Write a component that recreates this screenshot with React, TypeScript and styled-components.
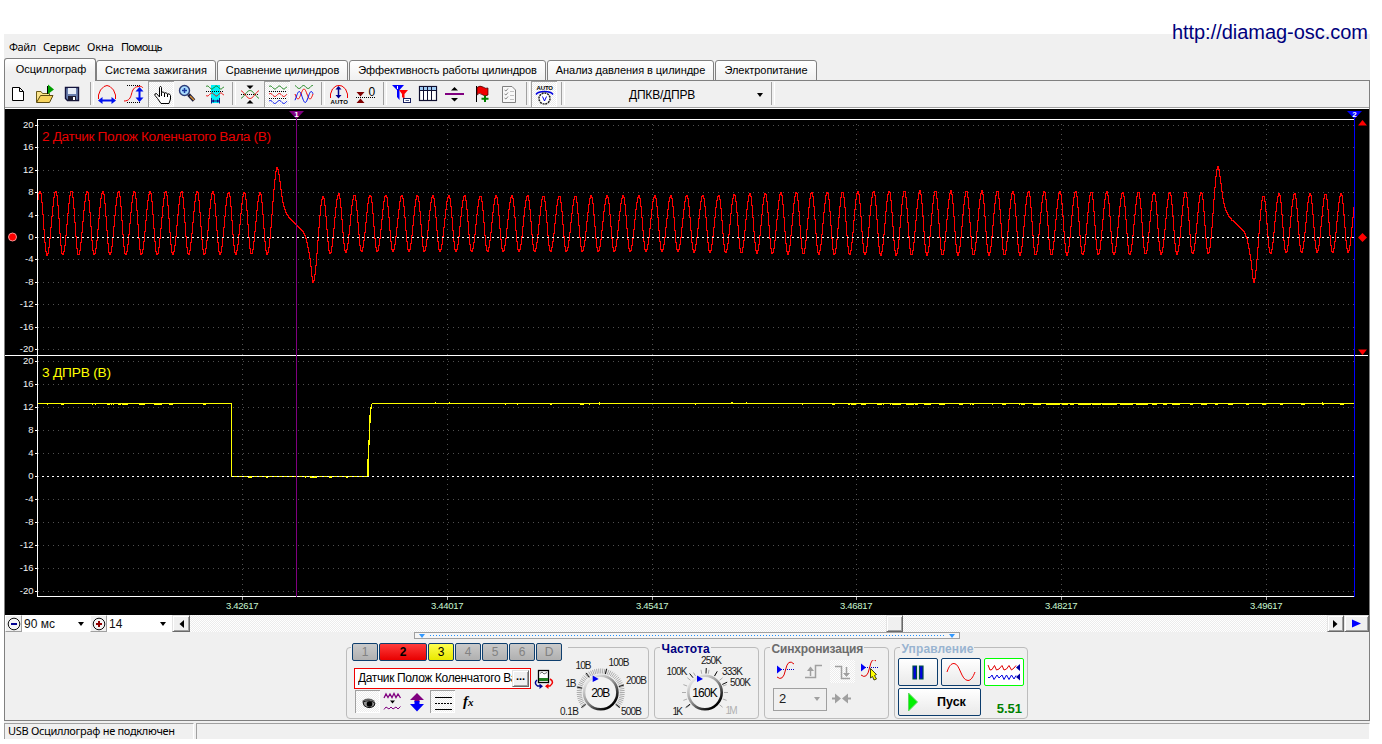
import React from "react";
import styled, { createGlobalStyle, css } from "styled-components";

const GlobalStyle = createGlobalStyle`
  * { box-sizing: border-box; }
  html, body { margin: 0; padding: 0; background: #fff; }
  body { font-family: "Liberation Sans", Arial, sans-serif; font-size: 11px; color: #000; overflow: hidden; }
  svg { display: block; }
`;

/* ---------- shell ---------- */

const Page = styled.div`
  position: relative;
  width: 1382px;
  height: 744px;
  padding: 34px 12px 5px 4px;
  background: #fff;
`;

const Window = styled.div`
  display: flex;
  flex-direction: column;
  width: 1366px;
  height: 705px;
  background: #f0f0f0;
`;

const SiteLink = styled.div`
  position: absolute;
  right: 14px;
  top: 20px;
  font-size: 20px;
  line-height: 24px;
  letter-spacing: -0.03px;
  color: #00007c;
`;

const MenuBar = styled.div`
  display: flex;
  gap: 7px;
  height: 24px;
  padding: 6px 0 0 5px;
  font-family: "Noto Sans", sans-serif;
  font-size: 11px;
  line-height: 14px;
`;

const MenuItem = styled.span<{ $w: number; $ls: number }>`
  width: ${(p) => p.$w}px;
  letter-spacing: ${(p) => p.$ls}px;
  white-space: nowrap;
`;

const TabRow = styled.div`
  display: flex;
  align-items: flex-end;
  height: 23px;
  gap: 1px;
  box-shadow: inset 0 -1px 0 #808080;
`;

const Tab = styled.div<{ $w: number; $active?: boolean; $ls: number }>`
  width: ${(p) => p.$w}px;
  height: 21px;
  border: 1px solid #808080;
  border-radius: 3px 3px 0 0;
  background: linear-gradient(#fff, #f0f0f0);
  text-align: center;
  line-height: 18px;
  letter-spacing: ${(p) => p.$ls}px;
  white-space: nowrap;
  ${(p) =>
    p.$active &&
    css`
      height: 23px;
      line-height: 21px;
      border-bottom: none;
      margin-right: -1px;
      padding-left: 2px;
      background: linear-gradient(#fff, #f0f0f0 60%);
    `}
`;

const PageFrame = styled.div`
  display: flex;
  flex-direction: column;
  height: 640px;
  border: 1px solid #808080;
  border-top: none;
`;

const StatusBar = styled.div`
  display: flex;
  gap: 2px;
  height: 18px;
  padding-top: 2px;
`;

const StatusCell = styled.div<{ $w?: number }>`
  ${(p) => (p.$w ? `width: ${p.$w}px;` : "flex: 1;")}
  border-top: 1px solid #a0a0a0;
  border-left: 1px solid #a0a0a0;
  border-right: 1px solid #fff;
  padding-left: 3px;
  font-family: "Noto Sans", sans-serif;
  font-size: 11px;
  line-height: 14px;
  letter-spacing: -0.3px;
  white-space: nowrap;
`;

/* ---------- toolbar ---------- */

const Toolbar = styled.div`
  display: flex;
  height: 28px;
  border-bottom: 1px solid #fff;
  box-shadow: inset 0 -1px 0 #a0a0a0;
`;

const dither = "repeating-conic-gradient(#fff 0 25%, #ececec 0 50%) 0 0 / 2px 2px";

const ToolButton = styled.div<{ $w: number; $pressed?: boolean }>`
  width: ${(p) => p.$w}px;
  height: 26px;
  ${(p) =>
    p.$pressed &&
    css`
      background: ${dither};
      box-shadow: inset 1px 1px 0 #a0a0a0, inset -1px -1px 0 #fff;
    `}
`;

const ToolSeparator = styled.div<{ $w: number; $at: number }>`
  width: ${(p) => p.$w}px;
  height: 25px;
  padding: 1px 0 0 ${(p) => p.$at}px;
  &::before {
    content: "";
    display: block;
    width: 2px;
    height: 23px;
    border-left: 1px solid #a0a0a0;
    border-right: 1px solid #fff;
  }
`;

const PresetCombo = styled.div`
  display: flex;
  align-items: center;
  justify-content: space-between;
  width: 202px;
  padding: 0 4px 0 64px;
  font-size: 12px;
  letter-spacing: -0.2px;
`;

const Caret = styled.span<{ $color?: string }>`
  width: 0;
  height: 0;
  border: 3px solid transparent;
  border-top: 4px solid ${(p) => p.$color || "#000"};
  border-bottom: none;
`;

const wave = (x0: number, x1: number, y: number, a: number, period: number, phase = 0) => {
  let d = "";
  for (let x = x0; x <= x1; x += 0.5) {
    d += `${d ? "L" : "M"}${x} ${(y - a * Math.sin(((x - x0) / period + phase) * 2 * Math.PI)).toFixed(2)}`;
  }
  return d;
};

const RED = "#f00000";
const BLUE = "#0010f0";
const GREEN = "#108010";

type Tool = { x: number; w: number; sep?: number; pressed?: boolean; art?: React.ReactNode };

const TOOLS: Tool[] = [
  {
    x: 5, w: 26,
    art: (
      <path d="M12.5 87.5H19.5L23.5 91.5V100.5H12.5ZM19.5 87.5V91.5H23.5" fill="#fff" stroke="#000" />
    ),
  },
  {
    x: 31, w: 28,
    art: (
      <>
        <path d="M36.5 102V91.5H41L42.5 93.5H49.5V96" fill="#fbe48c" stroke="#6b5a18" />
        <path d="M36.5 102.5L40.5 95.5H53L49.5 102.5Z" fill="#f7d35c" stroke="#5a4a10" />
        <path d="M47.5 94V86" stroke="#000" />
        <path d="M48 84.5L54 89.5L48 94Z" fill="#00a000" />
      </>
    ),
  },
  {
    x: 59, w: 27,
    art: (
      <>
        <path d="M65.5 87.5H78.5V100.5H67.5L65.5 98.5Z" fill="#6a7fae" stroke="#14143c" strokeWidth="1.4" />
        <rect x="68" y="88" width="8" height="6" fill="#e6ecf6" />
        <rect x="68" y="96" width="8" height="4.5" fill="#1c1c30" />
        <rect x="73" y="97" width="2" height="3" fill="#fff" />
      </>
    ),
  },
  { x: 86, w: 8, sep: 4 },
  {
    x: 94, w: 26,
    art: (
      <>
        <path d="M98.5 99V95L100.5 90L104 86.5L107 85.5L110 86.5L113.5 90L115.5 95V99" fill="none" stroke={RED} />
        <path d="M101 100.5H113" stroke={BLUE} strokeWidth="2" />
        <path d="M98 100.5L102.5 97V104ZM116 100.5L111.5 97V104Z" fill={BLUE} />
      </>
    ),
  },
  {
    x: 120, w: 28,
    art: (
      <>
        <path d="M127 85.5H140M127 102.5H140" stroke="#000" strokeDasharray="1 1" />
        <path d="M124 101C129 101 130.5 98 131.5 94S134 87 138 86.5S142 87 143 88" fill="none" stroke={RED} />
        <path d="M139.5 90V99" stroke={BLUE} strokeWidth="2" />
        <path d="M139.5 87L135.5 91.5H143.5ZM139.5 102L135.5 97.5H143.5Z" fill={BLUE} />
      </>
    ),
  },
  {
    x: 148, w: 26, pressed: true,
    art: (
      <path
        d="M159.5 97V87.5Q160.5 85 161.5 87.5V92.5Q163 91 164.5 93Q166 92 167.5 94Q169.5 93 170.5 95.5V99L169 103.5H161L157.5 98.5L155 95.5Q154 93.5 156.5 93.5L159.5 97M161.5 92.5V96M164.5 93V97M167.5 94V97"
        fill="#fff" stroke="#000"
      />
    ),
  },
  {
    x: 174, w: 27,
    art: (
      <>
        <path d="M188.5 94.5L194 100.5" stroke="#1c1c3c" strokeWidth="3.5" />
        <path d="M190 96L194 100" stroke="#d89030" strokeWidth="1.5" />
        <circle cx="184.5" cy="90.5" r="5" fill="#a8dcff" stroke="#2c3c78" strokeWidth="1.4" />
        <path d="M182 90.5H187M184.5 88V93" stroke="#1838a0" strokeWidth="1.5" />
      </>
    ),
  },
  {
    x: 201, w: 27,
    art: (
      <>
        <rect x="211" y="85" width="9" height="18" fill="#00f0f8" />
        <path d={wave(206, 224, 87.5, 1.5, 9, 0.1)} fill="none" stroke={GREEN} />
        <path d="M206 91.5H224" stroke="#000" strokeDasharray="1 1" />
        <path d={wave(206, 224, 94.5, 1.5, 9, 0.6)} fill="none" stroke={RED} />
        <path d="M211.5 98V103.5M219.5 98V103.5M212 101H219" stroke="#101080" />
        <path d="M212 101L214 99.3V102.7ZM219 101L217 99.3V102.7Z" fill="#101080" />
      </>
    ),
  },
  { x: 228, w: 9, sep: 4 },
  {
    x: 237, w: 27,
    art: (
      <>
        <path d="M241 94.5H259" stroke="#000" strokeDasharray="1 1" />
        <path d={wave(241, 259, 94.5, 4, 20, 0.8)} fill="none" stroke={GREEN} />
        <path d={wave(241, 259, 94.5, 4, 20, 0.3)} fill="none" stroke={RED} />
        <path d="M246.5 85.5H253.5L250 89ZM246.5 103.5H253.5L250 100Z" fill="#000" />
      </>
    ),
  },
  {
    x: 264, w: 26, pressed: true,
    art: (
      <>
        <path d={wave(269, 287, 87.5, 1.5, 9, 0.1)} fill="none" stroke={GREEN} />
        <path d="M269 91.5H287M269 98.5H287" stroke="#000" strokeDasharray="1 1" />
        <path d={wave(269, 287, 95, 1.5, 9, 0.1)} fill="none" stroke={RED} />
        <path d={wave(269, 287, 102, 1.5, 9, 0.1)} fill="none" stroke={BLUE} />
      </>
    ),
  },
  {
    x: 290, w: 27,
    art: (
      <>
        <path d={wave(295, 313, 87, 1.5, 9, 0.3)} fill="none" stroke={GREEN} />
        <path d={wave(295, 313, 94, 5, 12, 0.5)} fill="none" stroke={RED} />
        <path d={wave(295, 313, 97, 5.5, 12, 0.9)} fill="none" stroke={BLUE} />
      </>
    ),
  },
  { x: 317, w: 9, sep: 4 },
  {
    x: 326, w: 26,
    art: (
      <>
        <path d="M330.5 98V94L332.5 89L336 86L339 85.5L342 86L345.5 89L347.5 94V98" fill="none" stroke={RED} />
        <path d="M338.5 88V96" stroke="#000090" strokeWidth="1.5" />
        <path d="M338.5 86L335.5 89.5H341.5ZM338.5 98.5L335.5 95H341.5Z" fill="#000090" />
        <text x="330.5" y="103.5" fontSize="6" fontWeight="bold" textLength="17.5">AUTO</text>
      </>
    ),
  },
  {
    x: 352, w: 27,
    art: (
      <>
        <path d="M356 97.5H375" stroke="#000" strokeDasharray="1 1" />
        <path d="M356.5 92H364.5L360.5 96.5ZM356.5 103H364.5L360.5 98.5Z" fill="#800000" />
        <text x="368.5" y="95.5" fontSize="12">0</text>
      </>
    ),
  },
  { x: 379, w: 9, sep: 4 },
  {
    x: 388, w: 27,
    art: (
      <>
        <path d="M392 85H404L399.5 90V100L397 97V90Z" fill="#0000ff" />
        <path d="M399 90H408L404.5 94V99L402 97V94Z" fill="#ff0000" />
        <path d="M397.5 86V89" stroke="#fff" />
        <rect x="403.5" y="98.5" width="7" height="4" fill="#fff" stroke="#182060" />
        <path d="M405.5 100.5H409" stroke="#506090" />
      </>
    ),
  },
  {
    x: 415, w: 26,
    art: (
      <>
        <rect x="419.5" y="86.5" width="17" height="14" fill="#fff" stroke="#101030" strokeWidth="1.2" />
        <rect x="420" y="87" width="16" height="3" fill="#a0ccf4" />
        <path d="M420 90.5H436M423.5 87V100M427.5 87V100M431.5 87V100" stroke="#101030" />
      </>
    ),
  },
  {
    x: 441, w: 27,
    art: (
      <>
        <path d="M445 94H464" stroke="#800080" strokeWidth="2" />
        <path d="M451 90.5H458L454.5 87ZM451 98H458L454.5 101.5Z" fill="#000" />
      </>
    ),
  },
  {
    x: 468, w: 27,
    art: (
      <>
        <path d="M476.5 86V102" stroke="#000" />
        <path d="M477 87.5Q480 85 483 87T488 88V95Q485 97 482 94.5T477 95Z" fill="#f00000" stroke="#300" strokeWidth="0.7" />
        <path d="M485 95.5V102M481.5 98.7H488.5" stroke="#008000" strokeWidth="2" />
      </>
    ),
  },
  {
    x: 495, w: 26,
    art: (
      <>
        <path d="M502.5 86.5H512L515.5 90V102.5H502.5Z" fill="#f8f8f8" stroke="#808080" />
        <path d="M504.5 90L506 91L508 88.5M504.5 94L506 95L508 92.5M504.5 98L506 99L508 96.5" fill="none" stroke="#808080" strokeWidth="0.9" />
        <path d="M510 91.5H514M510 95.5H514M510 99.5H514" stroke="#c0c0c0" />
      </>
    ),
  },
  { x: 521, w: 10, sep: 5 },
  {
    x: 531, w: 26, pressed: true,
    art: (
      <>
        <text x="536.5" y="90" fontSize="6" fontWeight="bold" textLength="16.5">AUTO</text>
        <path d="M536 94.5Q538 91.5 544.5 91.5T553 94.5" fill="none" stroke="#0000e0" strokeWidth="1.4" />
        <circle cx="544.5" cy="98.5" r="5.5" fill="#fff" stroke="#202020" strokeWidth="1.5" strokeDasharray="2 0.8" />
        <path d="M542.5 96.5L544.5 101L546.5 96.5" fill="none" stroke="#0000e0" />
      </>
    ),
  },
  { x: 557, w: 8, sep: 4 },
];

/* ---------- oscillogram ---------- */

const GRID_X = [242, 447, 652, 856, 1061, 1266];
const GRID_LABELS = ["3.42617", "3.44017", "3.45417", "3.46817", "3.48217", "3.49617"];
const VOLTS = [20, 16, 12, 8, 4, 0, -4, -8, -12, -16, -20];
const ROWS_TOP = [125, 147, 170, 192, 215, 237, 259, 282, 304, 327, 349];
const ROWS_BOTTOM = [361, 384, 407, 430, 453, 476, 499, 522, 545, 568, 591];

const lerpTable = (table: number[][], x: number) => {
  for (let i = 1; i < table.length; i++) {
    if (x <= table[i][0]) {
      const [x0, y0] = table[i - 1];
      const [x1, y1] = table[i];
      return y0 + ((y1 - y0) * (x - x0)) / (x1 - x0);
    }
  }
  return table[table.length - 1][1];
};

const CREST = [[24, 190.5], [200, 191], [261, 192], [322, 196], [339, 193.3], [355, 194.2], [417, 195], [575, 195.3], [655, 195], [718, 194.5], [781, 192.3], [858, 191], [889, 190.4], [1000, 190.4], [1060, 191], [1138, 191.5], [1202, 191.5], [1263, 195.2], [1279, 193], [1360, 193.5]];
const TROUGH = [[30, 254.6], [180, 254.2], [270, 253.6], [329, 253.2], [346, 251.8], [361, 251], [575, 251], [690, 251.5], [725, 252.2], [781, 253.5], [842, 254.1], [890, 254.9], [1000, 254.9], [1075, 254.5], [1210, 253.5], [1270, 253.2], [1290, 252], [1360, 252]];

const PEAKS_A = Array.from({ length: 16 }, (_, i) => 24.4 + i * 15.72);
const PEAKS_B = [323.2, 338.8, 354.6, 370.3, 386, 402, 417.5, 433, 449, 464.7, 480.6, 496.2, 512, 527.7, 543.6, 559.5, 575.4, 591.3, 607.3, 623.2, 639, 655, 671, 687, 703, 718.8, 734.4, 750, 765.4, 781, 796.4, 811.8, 827.4, 842.7, 858, 873.8, 889.3, 904.6, 920, 935.5, 951, 966.6, 982, 997.5, 1013, 1028.7, 1044.4, 1060, 1075.7, 1091.4, 1107, 1122.8, 1138.6, 1154.2, 1170, 1185.7, 1201.4];
const PEAKS_C = [1263.6, 1279.2, 1294.7, 1310.2, 1325.6, 1341.2, 1356.8];

/* Alternating extrema of the crankshaft signal; the curve is a half cosine between neighbours. */
const pulses = (peaks: number[], close: boolean) => {
  const out: number[][] = [];
  peaks.forEach((p, i) => {
    out.push([p, lerpTable(CREST, p)]);
    if (i < peaks.length - 1 || close) out.push([p + 6.9, lerpTable(TROUGH, p + 6.9)]);
  });
  return out;
};

const EXTREMA = [
  ...pulses(PEAKS_A, true),
  [277.5, 167], [313, 282], ...pulses(PEAKS_B, true),
  [1218.2, 166], [1253.6, 282], ...pulses(PEAKS_C, false),
];

const GAP = [[0, 167], [1, 170], [2, 177], [3, 185], [4, 193], [5, 199], [6, 204], [7, 207.5], [8, 210.5], [10, 214.5], [12, 217.5], [14, 219.8], [18.5, 223.5], [22, 227], [25, 230], [27, 233.5], [29, 239], [31, 249], [33, 261], [34, 271], [35, 280], [36, 282.5]];

const crankLevel = (x: number) => {
  if (x > 277.5 && x < 313) return lerpTable(GAP, x - 277.5);
  if (x > 1218.2 && x < 1253.6) return lerpTable(GAP, x - 1218.2);
  for (let i = 1; i < EXTREMA.length; i++) {
    if (x <= EXTREMA[i][0]) {
      const [x0, y0] = EXTREMA[i - 1];
      const [x1, y1] = EXTREMA[i];
      return y0 + ((y1 - y0) * (1 - Math.cos((Math.PI * (x - x0)) / (x1 - x0)))) / 2;
    }
  }
  return 237;
};

const crankPath = (() => {
  let d = "";
  for (let x = 38; x < 1354; x++) {
    const a = Math.round(crankLevel(x));
    const b = Math.round(crankLevel(x + 1));
    d += `M${x} ${Math.min(a, b)}h1v${Math.abs(a - b) + 1}h-1z`;
  }
  return d;
})();

/* [start, length] of one-pixel ripples on the camshaft trace */
const RIPPLE_LOW = [[47, 1], [61, 3], [92, 1], [95, 1], [107, 3], [111, 1], [113, 1], [118, 3], [122, 6], [139, 6], [154, 8], [169, 4], [203, 3], [505, 1], [517, 1], [550, 2], [580, 4], [589, 1], [599, 1], [695, 1], [802, 1], [832, 3], [848, 2], [851, 5], [861, 5], [877, 5], [883, 1], [890, 1], [892, 9], [906, 8], [915, 3], [924, 7], [939, 6], [959, 4], [970, 1], [972, 2], [992, 1], [1002, 4], [1019, 1], [1021, 4], [1033, 8], [1046, 14], [1062, 6], [1070, 4], [1078, 13], [1092, 9], [1102, 15], [1120, 13], [1136, 12], [1152, 5], [1163, 4], [1172, 8], [1190, 3], [1201, 6], [1215, 3], [1228, 5], [1246, 3], [1262, 4], [1280, 3], [1301, 4], [1322, 2], [1340, 4]];
const RIPPLE_HIGH = [[435, 1], [449, 1], [599, 1], [731, 2], [746, 1], [1322, 1]];
const RIPPLE_ZERO = [[248, 4], [266, 2], [305, 1], [310, 7], [329, 3], [346, 2]];
const dashes = (list: number[][], y: number) => list.map(([x, w]) => `M${x} ${y}h${w}v1h-${w}z`).join("");

const Screen = () => (
  <svg width="1364" height="506" viewBox="5 109 1364 506" fontFamily="Liberation Sans, Arial, sans-serif">
    <rect x="5" y="109" width="1364" height="506" fill="#000" />
    <g shapeRendering="crispEdges">
      {[...ROWS_TOP, ...ROWS_BOTTOM].map((y) => (
        <path key={y} d={`M38 ${y + 0.5}H1354`} stroke="#505050" strokeDasharray="1 4" />
      ))}
      {GRID_X.map((x) => (
        <path key={x} d={`M${x + 0.5} 124V596`} stroke="#505050" strokeDasharray="1 4" />
      ))}
      {GRID_X.map((x) => (
        <path key={x} d={`M${x + 0.5} 597V600`} stroke="#b0b0b0" />
      ))}
      <path d="M37 119.5H1354M37.5 119V597M5 355.5H1368M37 596.5H1354" stroke="#fff" />
      {[...ROWS_TOP, ...ROWS_BOTTOM].map((y) => (
        <path key={y} d={`M35 ${y + 0.5}H38`} stroke="#fff" />
      ))}
      <path d={crankPath} fill="#ff0000" />
      <path d="M38 403h194v73h135v1h-136v-73h-193z" fill="#ffff00" />
      <path d="M367 459h1v17h-1zM368 440h1v36h-1zM369 415h1v30h-1zM370 407h1v16h-1zM371 404h1v5h-1zM372 403H1354v1H372z" fill="#ffff00" />
      <path d={dashes(RIPPLE_LOW, 404) + dashes(RIPPLE_HIGH, 402) + dashes(RIPPLE_ZERO, 477)} fill="#ffff00" />
      <path d="M42 237.5H1354M42 476.5H1354" stroke="#fff" strokeDasharray="2 3" />
      <path d="M296.5 113V597" stroke="#800080" />
      <path d="M1354.5 113V597" stroke="#0000ff" />
    </g>
    <path d="M289 111H304L296.5 119Z" fill="#800080" />
    <path d="M1347 111H1362L1354.5 119Z" fill="#0000ff" />
    <g fill="#fff" fontSize="8" fontWeight="bold" textAnchor="middle">
      <text x="296.5" y="117">1</text>
      <text x="1354.5" y="117">2</text>
    </g>
    <path d="M1358 125.5H1367L1362.5 120ZM1358 349.5H1367L1362.5 355ZM1362.5 233L1367 237.5L1362.5 242L1358 237.5Z" fill="#ff0000" />
    <circle cx="12.5" cy="237" r="4" fill="#ff0000" stroke="#ff9090" />
    <g fill="#f4f4f4" fontSize="9.5" textAnchor="end">
      {VOLTS.map((v, i) => (
        <text key={v} x="33.5" y={ROWS_TOP[i] + 3}>{v}</text>
      ))}
      {VOLTS.map((v, i) => (
        <text key={v} x="33.5" y={ROWS_BOTTOM[i] + 3}>{v}</text>
      ))}
    </g>
    <g fill="#c8f8d0" fontSize="9.5">
      {GRID_X.map((x, i) => (
        <text key={x} x={x - 16} y="609" textLength="32.5">{GRID_LABELS[i]}</text>
      ))}
    </g>
    <text x="42" y="141" fontSize="13.7" fill="#e80000" textLength="229">2 Датчик Полож Коленчатого Вала (В)</text>
    <text x="42" y="377" fontSize="13.7" fill="#ffff00" textLength="69">3 ДПРВ (В)</text>
  </svg>
);

/* ---------- scroll row ---------- */

const ScrollRow = styled.div`
  display: flex;
  height: 17px;
  background: #fff;
`;

const RaisedButton = styled.div<{ $w: number }>`
  display: flex;
  align-items: center;
  justify-content: center;
  width: ${(p) => p.$w}px;
  height: 17px;
  background: #f0f0f0;
  border: 1px solid #e3e3e3;
  border-right-color: #696969;
  border-bottom-color: #696969;
  box-shadow: inset 1px 1px 0 #fff, inset -1px -1px 0 #a0a0a0;
`;

const ZoomButton = styled(RaisedButton)`
  box-shadow: none;
  border-color: #fff #a0a0a0 #a0a0a0 #fff;
`;

const Spin = styled.div<{ $w: number }>`
  display: flex;
  align-items: center;
  justify-content: space-between;
  width: ${(p) => p.$w}px;
  padding: 0 6px 0 2px;
  font-size: 12px;
  line-height: 16px;
  color: #101010;
`;

const Track = styled.div`
  flex: 1;
  display: flex;
  background: ${dither};
  padding-left: 696px;
`;

const ZoomGlyph = ({ plus }: { plus?: boolean }) => (
  <svg width="14" height="14" viewBox="0 0 14 14">
    <circle cx="7" cy="7" r="5.8" fill="#f4f4f4" stroke="#101010" />
    <path d="M4 7H10" stroke={plus ? "#900000" : "#000090"} strokeWidth="2" />
    {plus && <path d="M7 4V10" stroke="#900000" strokeWidth="2" />}
  </svg>
);

/* ---------- bottom controls ---------- */

const Bottom = styled.div`
  display: flex;
  flex-direction: column;
  height: 88px;
  background: #f0f0f0;
`;

const Splitter = styled.div`
  display: flex;
  align-items: center;
  justify-content: space-between;
  width: 546px;
  height: 7px;
  margin-left: 409px;
  padding: 0 4px;
  border: 1px solid #a0a0a0;
  background: #f6f6f6;
`;

const SplitterDots = styled.div`
  flex: 1;
  height: 1px;
  margin: 0 4px 0 5px;
  background: linear-gradient(90deg, #2090ff 1px, transparent 1px) 0 0 / 3px 1px;
`;

const Groups = styled.div`
  display: flex;
  gap: 5px;
  padding: 8px 0 0 341px;
`;

const Group = styled.div<{ $w: number }>`
  position: relative;
  display: flex;
  width: ${(p) => p.$w}px;
  height: 72px;
  border: 1px solid #bcbcbc;
  border-radius: 4px;
`;

const GroupTitle = styled.div<{ $color: string; $ls: number }>`
  position: absolute;
  left: 5px;
  top: -6px;
  padding: 0 1px;
  background: #f0f0f0;
  color: ${(p) => p.$color};
  font-size: 12px;
  font-weight: bold;
  line-height: 14px;
  letter-spacing: ${(p) => p.$ls}px;
  text-indent: 0.5px;
  white-space: nowrap;
`;

const ChannelColumn = styled.div`
  display: flex;
  flex-direction: column;
  flex: none;
  width: 211px;
  padding-left: 4px;
`;

const ChannelRow = styled.div`
  display: flex;
  gap: 1px;
  width: 217px;
  height: 18px;
  margin-top: -5px;
  padding-left: 1px;
  background: #f0f0f0;
`;

const ChannelButton = styled.div<{ $tone?: "red" | "yellow" }>`
  flex: none;
  width: ${(p) => (p.$tone === "red" ? 48 : 26)}px;
  height: 18px;
  border: 1px solid #0f3f6e;
  border-radius: 2px;
  background: linear-gradient(#cacaca, #b0b0b0);
  color: #828282;
  text-align: center;
  font-size: 12px;
  line-height: 16px;
  ${(p) =>
    p.$tone === "red" &&
    css`
      background: linear-gradient(#ff3c3c, #e80000);
      color: #000;
      font-weight: bold;
    `}
  ${(p) =>
    p.$tone === "yellow" &&
    css`
      background: linear-gradient(#ffff50, #e8e800);
      color: #000;
    `}
`;

const SensorRow = styled.div`
  display: flex;
  align-items: center;
  gap: 3px;
  height: 21px;
  margin-top: 7px;
  padding-left: 3px;
`;

const SensorField = styled.div`
  display: flex;
  flex: none;
  width: 177px;
  height: 21px;
  padding: 1px 1px 1px 3px;
  border: 1px solid #f00000;
  background: #fff;
`;

const SensorName = styled.div`
  flex: none;
  width: 154px;
  overflow: hidden;
  white-space: nowrap;
  font-size: 12px;
  line-height: 17px;
  letter-spacing: -0.36px;
`;

const DotsButton = styled(RaisedButton)`
  font-weight: bold;
  line-height: 10px;
  padding-bottom: 5px;
`;

const SensorArt = styled.svg`
  flex: none;
`;

const OptionRow = styled.div`
  display: flex;
  height: 23px;
  margin-top: 1px;
  padding-left: 4px;
`;

const OptionButton = styled(ToolButton)`
  flex: none;
  height: 23px;
`;

const DisabledPressedButton = styled(OptionButton)`
  background: ${dither};
`;

const KnobText = styled.text`
  font-family: "Liberation Sans", Arial, sans-serif;
  font-size: 10px;
`;

const SyncGrid = styled.div`
  display: flex;
  flex-direction: column;
  gap: 5px;
  padding: 12px 0 0 8px;
`;

const SyncRow = styled.div`
  display: flex;
  height: 23px;
`;

const SyncSelect = styled.div`
  display: flex;
  align-items: center;
  justify-content: space-between;
  width: 54px;
  height: 23px;
  padding: 0 6px 2px 5px;
  border: 1px solid #a0a0a0;
  font-size: 13px;
  color: #202020;
`;

const Controls = styled.div`
  display: flex;
  flex-wrap: wrap;
  align-content: flex-start;
  gap: 2px 3px;
  padding: 10px 0 0 3px;
`;

const ControlButton = styled.div<{ $w: number; $ring?: string }>`
  display: flex;
  align-items: center;
  justify-content: center;
  width: ${(p) => p.$w}px;
  height: 28px;
  border: 1px solid ${(p) => p.$ring || "#0c3c6c"};
  border-radius: 2px;
  background: ${(p) => (p.$ring ? "#fff" : "linear-gradient(#fff, #e9e9e9)")};
`;

const StartButton = styled(ControlButton)`
  justify-content: flex-start;
  padding-left: 8px;
`;

const StartLabel = styled.span`
  padding-left: 18px;
  font-size: 12.5px;
  font-weight: bold;
`;

const Version = styled.div`
  width: 40px;
  padding: 14px 2px 0 0;
  text-align: right;
  font-size: 13px;
  line-height: 14px;
  font-weight: bold;
  color: #008000;
`;

const tick = (cx: number, cy: number, deg: number, r0: number, r1: number) => {
  const a = (deg * Math.PI) / 180;
  return `M${(cx + r0 * Math.sin(a)).toFixed(2)} ${(cy - r0 * Math.cos(a)).toFixed(2)}L${(cx + r1 * Math.sin(a)).toFixed(2)} ${(cy - r1 * Math.cos(a)).toFixed(2)}`;
};

type KnobLabel = { x: number; y: number; w: number; text: string; deg: number; dim?: boolean };

const Knob = (p: { id: string; box: number[]; cx: number; cy: number; value: string; vw: number; step: number; fine: number; labels: KnobLabel[] }) => {
  const ticks: string[] = [];
  for (let a = -130; a <= 130; a += p.step) ticks.push(tick(p.cx, p.cy, a, 19, p.fine));
  return (
    <svg width={p.box[2]} height={p.box[3]} viewBox={p.box.join(" ")}>
      <defs>
        <linearGradient id={p.id} x1="0.15" y1="0.1" x2="0.8" y2="0.9">
          <stop offset="0" stopColor="#e8e8e8" />
          <stop offset="0.5" stopColor="#909090" />
          <stop offset="1" stopColor="#000" />
        </linearGradient>
      </defs>
      <path d={ticks.join("")} stroke="#a4a4a4" strokeWidth="0.9" />
      <path d={p.labels.filter((l) => !l.dim).map((l) => tick(p.cx, p.cy, l.deg, 19, 24.5)).join("")} stroke="#101010" />
      <circle cx={p.cx} cy={p.cy} r="16.7" fill="#f2f2f2" stroke={`url(#${p.id})`} strokeWidth="2.6" />
      <path d={`M${p.cx - 8} ${p.cy - 17}L${p.cx - 2} ${p.cy - 13.5}L${p.cx - 8} ${p.cy - 10.5}Z`} fill="#0000f0" />
      <text x={p.cx - p.vw / 2} y={p.cy + 4.5} fontSize="12" textLength={p.vw}>{p.value}</text>
      {p.labels.map((l) => (
        <KnobText key={l.text} x={l.x} y={l.y + 3.5} textLength={l.w} fill={l.dim ? "#b0b0b0" : "#181818"}>{l.text}</KnobText>
      ))}
    </svg>
  );
};

const VOLT_LABELS: KnobLabel[] = [
  { x: 560, y: 711, w: 19, text: "0.1В", deg: -128 },
  { x: 565.5, y: 683, w: 11, text: "1В", deg: -77 },
  { x: 575.5, y: 665.5, w: 16, text: "10В", deg: -37 },
  { x: 608.5, y: 662.5, w: 21, text: "100В", deg: 14 },
  { x: 626, y: 680, w: 21, text: "200В", deg: 72 },
  { x: 621, y: 711, w: 21, text: "500В", deg: 128 },
];

const FREQ_LABELS: KnobLabel[] = [
  { x: 666.5, y: 671, w: 21, text: "100K", deg: -39 },
  { x: 701, y: 660.5, w: 21, text: "250K", deg: 3 },
  { x: 722, y: 671, w: 21, text: "333K", deg: 30 },
  { x: 730, y: 682.5, w: 21, text: "500K", deg: 65 },
  { x: 672.5, y: 711, w: 10.5, text: "1K", deg: -128 },
  { x: 725.5, y: 710, w: 12, text: "1M", deg: 130, dim: true },
];

export default function App() {
  return (
    <Page>
      <GlobalStyle />
      <Window>
        <MenuBar>
          <MenuItem $w={27} $ls={-0.4}>Файл</MenuItem>
          <MenuItem $w={37} $ls={-0.2}>Сервис</MenuItem>
          <MenuItem $w={27} $ls={-0.1}>Окна</MenuItem>
          <MenuItem $w={41} $ls={-0.8}>Помощь</MenuItem>
        </MenuBar>
        <TabRow>
          <Tab $w={92} $ls={-0.05} $active>Осциллограф</Tab>
          <Tab $w={120} $ls={0.12}>Система зажигания</Tab>
          <Tab $w={131} $ls={-0.1}>Сравнение цилиндров</Tab>
          <Tab $w={197} $ls={-0.1}>Эффективность работы цилиндров</Tab>
          <Tab $w={167} $ls={-0.05}>Анализ давления в цилиндре</Tab>
          <Tab $w={102} $ls={-0.05}>Электропитание</Tab>
        </TabRow>
        <PageFrame>
          <Toolbar>
            {TOOLS.map((t) =>
              t.sep ? (
                <ToolSeparator key={t.x} $w={t.w} $at={t.sep} />
              ) : (
                <ToolButton key={t.x} $w={t.w} $pressed={t.pressed}>
                  <svg width={t.w} height="26" viewBox={`${t.x} 81 ${t.w} 26`}>{t.art}</svg>
                </ToolButton>
              )
            )}
            <PresetCombo>
              ДПКВ/ДПРВ
              <Caret />
            </PresetCombo>
            <ToolSeparator $w={8} $at={4} />
          </Toolbar>
          <Screen />
          <ScrollRow>
            <ZoomButton $w={17}><ZoomGlyph /></ZoomButton>
            <Spin $w={68}>90 мс<Caret /></Spin>
            <ZoomButton $w={17}><ZoomGlyph plus /></ZoomButton>
            <Spin $w={65}>14<Caret /></Spin>
            <RaisedButton $w={18}>
              <svg width="5" height="8"><path d="M5 0V8L0.5 4Z" /></svg>
            </RaisedButton>
            <Track><RaisedButton $w={17} /></Track>
            <RaisedButton $w={17}>
              <svg width="5" height="8"><path d="M0 0V8L4.5 4Z" /></svg>
            </RaisedButton>
            <RaisedButton $w={25}>
              <svg width="9" height="9"><path d="M0 0.5V8.5L9 4.5Z" fill="#0000ff" /></svg>
            </RaisedButton>
          </ScrollRow>
          <Bottom>
            <Splitter>
              <Caret $color="#3399ff" />
              <SplitterDots />
              <Caret $color="#3399ff" />
            </Splitter>
            <Groups>
              <Group $w={303}>
                <ChannelColumn>
                  <ChannelRow>
                    <ChannelButton>1</ChannelButton>
                    <ChannelButton $tone="red">2</ChannelButton>
                    <ChannelButton $tone="yellow">3</ChannelButton>
                    <ChannelButton>4</ChannelButton>
                    <ChannelButton>5</ChannelButton>
                    <ChannelButton>6</ChannelButton>
                    <ChannelButton>D</ChannelButton>
                  </ChannelRow>
                  <SensorRow>
                    <SensorField>
                      <SensorName>Датчик Полож Коленчатого Ва</SensorName>
                      <DotsButton $w={17}>...</DotsButton>
                    </SensorField>
                    <SensorArt width="20" height="20" viewBox="534 669 20 20">
                      <rect x="538.5" y="670.5" width="10" height="12" fill="#fff" stroke="#000" strokeWidth="1.3" />
                      <path d="M540 673.5L542 672L544 674L547 672.5" fill="none" stroke="#707070" />
                      <rect x="539" y="678" width="9" height="3" fill="#208020" />
                      <path d="M537 680Q533.5 683 537.5 686H541" fill="none" stroke="#000090" strokeWidth="1.5" />
                      <path d="M550 679Q555 682 550 686H546" fill="none" stroke="#f00000" strokeWidth="1.5" />
                      <path d="M539.5 683.5L543 686.3L539.5 689Z" fill="#000090" />
                      <path d="M548.5 683.5L545 686.3L548.5 689Z" fill="#f00000" />
                    </SensorArt>
                  </SensorRow>
                  <OptionRow>
                    <OptionButton $w={25} $pressed>
                      <svg width="25" height="23" viewBox="355 690 25 23">
                        <path d="M362.5 701.5Q368 697 374.5 701.5" fill="none" stroke="#606060" strokeWidth="1.5" />
                        <path d="M363 702Q369 699 375 703L374 706Q369 709.5 364 705.5Z" fill="#909090" stroke="#101010" />
                        <circle cx="369.5" cy="704" r="2.8" fill="#000" />
                      </svg>
                    </OptionButton>
                    <OptionButton $w={25}>
                      <svg width="25" height="23" viewBox="380 690 25 23" fill="none" stroke="#800080">
                        <path d="M384 698L386 694L388 697.5L390 694L392 697.5L394 693.5L396 697.5L398 694L400.5 698" strokeWidth="1.3" />
                        <path d="M384 709.5L386 707L389 709L391 707L393 709L396 707L398 709L400.5 706.5" />
                        <path d="M390 700.5H395L392.5 703.5Z" fill="#000" stroke="none" />
                      </svg>
                    </OptionButton>
                    <OptionButton $w={25}>
                      <svg width="25" height="23" viewBox="405 690 25 23">
                        <path d="M417 693L424 700H419.5V702H414.5V700H410Z" fill="#800080" />
                        <path d="M417 711.5L424 704H419.5V701H414.5V704H410Z" fill="#0000f8" />
                      </svg>
                    </OptionButton>
                    <OptionButton $w={25} $pressed>
                      <svg width="25" height="23" viewBox="430 690 25 23" stroke="#000">
                        <path d="M435 697.5H452M435 709.5H452" />
                        <path d="M435 703.5H452" strokeDasharray="2 1" />
                      </svg>
                    </OptionButton>
                    <OptionButton $w={26}>
                      <svg width="26" height="23" viewBox="455 690 26 23" fontFamily="Liberation Serif, serif" fontStyle="italic" fontWeight="bold">
                        <text x="463" y="706" fontSize="15">f</text>
                        <text x="468" y="706" fontSize="11">x</text>
                      </svg>
                    </OptionButton>
                  </OptionRow>
                </ChannelColumn>
                <Knob id="ring-volt" box={[558, 648, 90, 70]} cx={600.7} cy={692.5} value="20В" vw={19} step={5} fine={24} labels={VOLT_LABELS} />
              </Group>
              <Group $w={105}>
                <Knob id="ring-freq" box={[655, 648, 103, 70]} cx={705} cy={692.5} value="160K" vw={25.5} step={20} fine={23} labels={FREQ_LABELS} />
                <GroupTitle $color="#000080" $ls={0.2}>Частота</GroupTitle>
              </Group>
              <Group $w={125}>
                <GroupTitle $color="#6c6c6c" $ls={-0.15}>Синхронизация</GroupTitle>
                <SyncGrid>
                  <SyncRow>
                    <OptionButton $w={28}>
                      <svg width="28" height="23" viewBox="773 660 28 23">
                        <path d="M777 669.5H794" stroke="#0000c0" strokeDasharray="1 1" />
                        <path d="M777 665.5V673.5L782 669.5Z" fill="#0000f8" />
                        <path d="M777 677Q783 682 785.5 670T794 664" fill="none" stroke="#e00000" />
                      </svg>
                    </OptionButton>
                    <OptionButton $w={29}>
                      <svg width="29" height="23" viewBox="801 660 29 23" fill="none" stroke="#a0a0a0" strokeWidth="1.5">
                        <path d="M805 677.5H815.5V665.5H822M810.5 676V669" />
                        <path d="M807 671L810.5 666.5L814 671Z" fill="#a0a0a0" stroke="none" />
                      </svg>
                    </OptionButton>
                    <DisabledPressedButton $w={25}>
                      <svg width="25" height="23" viewBox="830 660 25 23" fill="none" stroke="#a0a0a0" strokeWidth="1.5">
                        <path d="M835 666.5H841.5V678.5H850M846.5 667V674" />
                        <path d="M843 673L846.5 677L850 673Z" fill="#a0a0a0" stroke="none" />
                      </svg>
                    </DisabledPressedButton>
                    <OptionButton $w={28}>
                      <svg width="28" height="23" viewBox="855 660 28 23">
                        <path d="M861 667.5H878" stroke="#0000c0" strokeDasharray="1 1" />
                        <path d="M861 663.5V671.5L866 667.5Z" fill="#0000f8" />
                        <path d="M861 675Q867 680 869.5 668T876 661" fill="none" stroke="#e00000" />
                        <path d="M870.5 668.5L876.5 674.5L874.5 675.5L876.5 679L874 680L872.5 676.5L870.5 678Z" fill="#ffff00" stroke="#303000" strokeWidth="0.9" />
                      </svg>
                    </OptionButton>
                  </SyncRow>
                  <SyncRow>
                    <SyncSelect>2<Caret $color="#a0a0a0" /></SyncSelect>
                    <svg width="28" height="23" viewBox="827 689 28 23">
                      <path d="M832 698.5H835V694.5L841 699.5L835 704.5V700.5H832ZM851 698.5H848V694.5L842 699.5L848 704.5V700.5H851Z" fill="#a0a0a0" />
                    </svg>
                  </SyncRow>
                </SyncGrid>
              </Group>
              <Group $w={134}>
                <GroupTitle $color="#99b4d1" $ls={0.1}>Управление</GroupTitle>
                <Controls>
                  <ControlButton $w={40}>
                    <svg width="12" height="15"><path d="M1 1h3.5v13H1zM7.5 1H11v13H7.5z" fill="#0000e0" stroke="#005040" strokeWidth="1.2" /></svg>
                  </ControlButton>
                  <ControlButton $w={40}>
                    <svg width="30" height="20"><path d="M1 10C3 4 5 1.5 8 1.5C14 1.5 15 18.5 22 18.5C25 18.5 27 15 29 10" fill="none" stroke="#f00000" /></svg>
                  </ControlButton>
                  <ControlButton $w={40} $ring="#00ff00">
                    <svg width="34" height="18" fill="none">
                      <path d="M1 2L3 7L5 6.5L7.5 2.5L9.5 7L12 6L15 2.5L17 7L19.5 6L22 2.5L24.5 7L27 5L29 2.5" stroke="#e00000" />
                      <path d="M1 14.5H3L5 12L7 16.5L10 12L12 15L15 12L17 16.5L19.5 12L22 16.5L24.5 12L27 16L29 12.5" stroke="#0000e0" />
                      <path d="M33 1V8L29 4.5ZM33 10.5V17.5L29 14Z" fill="#0000a0" />
                    </svg>
                  </ControlButton>
                  <StartButton $w={83}>
                    <svg width="12" height="20"><path d="M1.5 1V19L10.5 10Z" fill="#00f000" stroke="#60d860" /></svg>
                    <StartLabel>Пуск</StartLabel>
                  </StartButton>
                  <Version>5.51</Version>
                </Controls>
              </Group>
            </Groups>
          </Bottom>
        </PageFrame>
        <StatusBar>
          <StatusCell $w={190}>USB Осциллограф не подключен</StatusCell>
          <StatusCell />
        </StatusBar>
      </Window>
      <SiteLink>http://diamag-osc.com</SiteLink>
    </Page>
  );
}
